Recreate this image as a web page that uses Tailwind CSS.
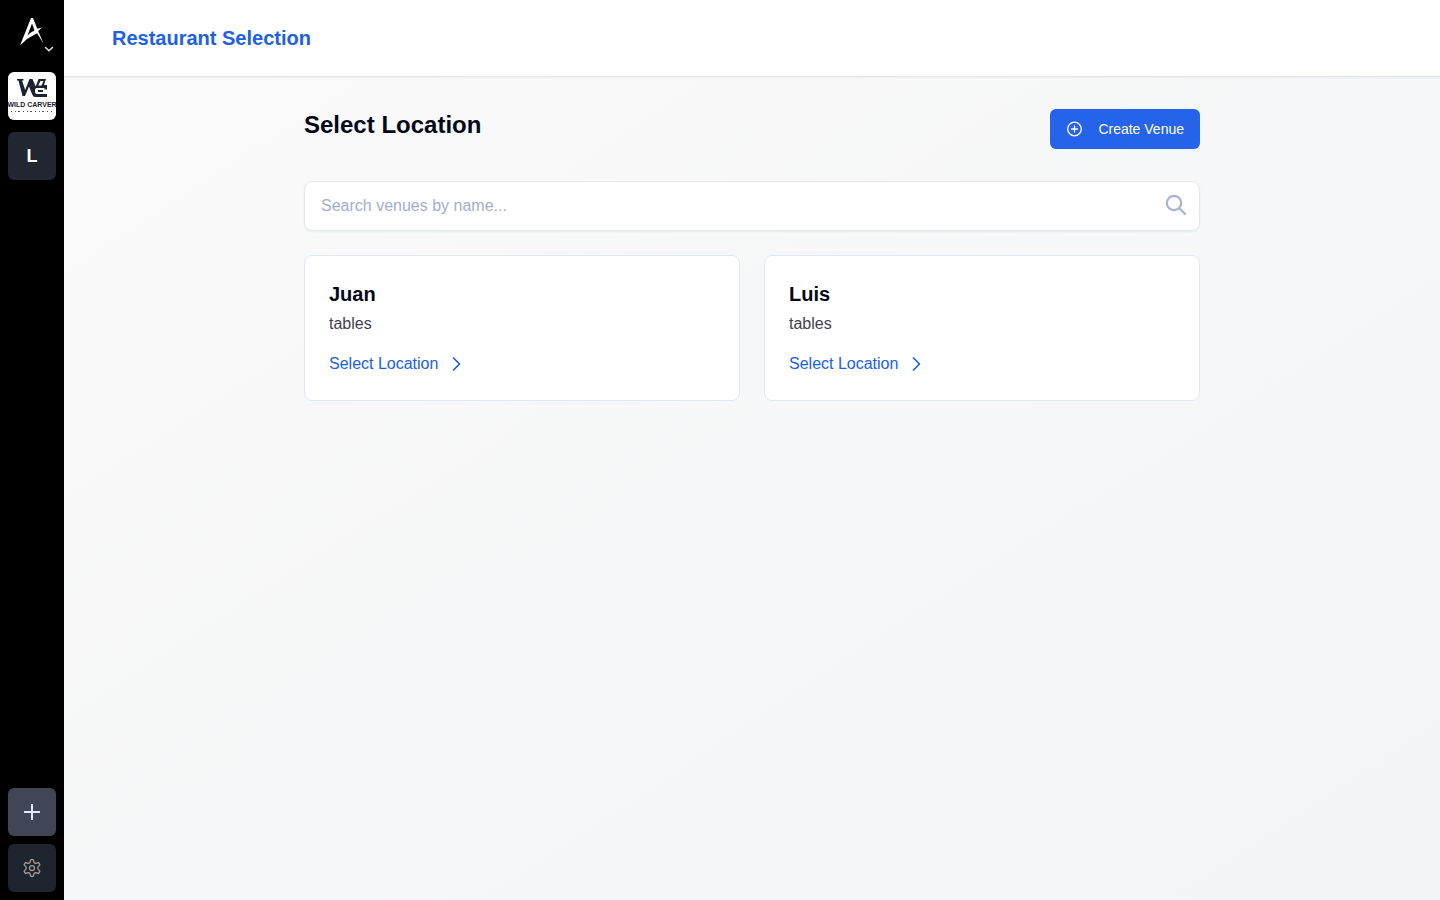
<!DOCTYPE html>
<html lang="en">
<head>
<meta charset="utf-8">
<meta name="viewport" content="width=device-width, initial-scale=1">
<title>Restaurant Selection</title>
<script src="https://cdn.jsdelivr.net/npm/@tailwindcss/browser@4"></script>
</head>
<body class="flex min-h-screen bg-black font-['Liberation_Sans',Arial,sans-serif] text-base text-[#020817]">
  <aside class="flex w-16 shrink-0 flex-col items-center justify-between bg-black px-2 pt-2 pb-2">
    <div class="flex flex-col gap-3">
      <button type="button" aria-label="Account menu" class="size-12 mb-1">
        <svg class="size-12" viewBox="8 8 48 48" fill="none">
          <path fill="#fff" fill-rule="evenodd" d="M31 18h2l4.300 10.800 4.700-1.300-3.800 3.500 5.300 12.500L37 33.200 27 39 20 45.500zM32 23.500 27.500 35.500 30 33 34.500 30.500z"/>
          <path stroke="#e5e7eb" stroke-width="1.500" stroke-linecap="round" stroke-linejoin="round" d="m45.500 47.500 3.500 3.200 3.500-3.200"/>
        </svg>
      </button>
      <button type="button" aria-label="Wild Carver" class="size-12 overflow-hidden rounded-md bg-white">
        <svg class="size-12" viewBox="0 0 48 48" fill="none">
          <path fill="#1c2230" d="M9 7h6.500v1.500H14l3.200 9.500L21.500 7h3l3.200 7.500L30.500 7H38l-2 6h3v4.500h-2.500V16h-7.500q-2 0-2 2v2q0 2 2 2H39v3H27.500q-2.500 0-3.300-2.500L21 14.500 17 24h-2.500L10.500 8.500H9zM32.500 9l-2.300 4.500h3.300l2-4.500z"/>
          <path stroke="#1c2230" stroke-width="2" d="M30 19h5"/>
          <text x="24" y="35" text-anchor="middle" fill="#1c2230" font-family="'Liberation Sans',sans-serif" font-size="7" font-weight="700">WILD CARVER</text>
          <path stroke="#4b5563" stroke-width="1" stroke-dasharray="1 3 1 2 2 3" d="M3 39.500h43"/>
        </svg>
      </button>
      <button type="button" class="size-12 rounded-md bg-[#222631] text-lg font-bold text-white">L</button>
    </div>
    <div class="flex flex-col gap-2">
      <button type="button" aria-label="Add restaurant" class="flex size-12 items-center justify-center rounded-md bg-[#404656]">
        <svg class="size-6" viewBox="0 0 24 24" stroke="#e6ebfa" stroke-width="2"><path d="M12 4v16M4 12h16"/></svg>
      </button>
      <button type="button" aria-label="Settings" class="flex size-12 items-center justify-center rounded-md bg-[#1f232d]">
        <svg class="size-5" viewBox="0 0 24 24" fill="none" stroke="#a39c9c" stroke-width="1.500" stroke-linecap="round" stroke-linejoin="round">
          <path d="M10.500 2h3l1 3.500 2 1 3.500-1 1.500 2.700L19 11v2l2.500 2.800L20 18.500l-3.500-1-2 1-1 3.500h-3l-1-3.500-2-1-3.500 1-1.500-2.700L5 13v-2L2.500 8.200 4 5.500l3.500 1 2-1z"/>
          <circle cx="12" cy="12" r="3"/>
        </svg>
      </button>
    </div>
  </aside>
  <div class="flex min-w-0 flex-1 flex-col bg-linear-to-br from-[#fafafa] to-[#f3f4f6]">
    <header class="border-b border-slate-200 bg-white px-12 py-6 shadow-xs">
      <h1 class="text-xl font-bold text-[#2060e6]">Restaurant Selection</h1>
    </header>
    <main class="mx-auto w-full max-w-4xl flex-1 py-8">
      <div class="mb-8 flex items-start justify-between">
        <h2 class="text-2xl font-bold">Select Location</h2>
        <button type="button" class="flex h-10 items-center gap-4 rounded-md bg-[#2563eb] px-4 text-sm text-white">
          <svg class="size-4" viewBox="0 0 16 16" fill="none" stroke="currentColor" stroke-width="1.300" stroke-linecap="round"><circle cx="8.500" cy="8" r="6.800"/><path d="M8.500 5v6M5.500 8h6"/></svg>
          Create Venue
        </button>
      </div>
      <div class="relative mb-6">
        <input type="search" aria-label="Search venues by name" placeholder="Search venues by name..." class="block w-full rounded-lg border border-slate-200 bg-white py-3 pr-12 pl-4 shadow-xs placeholder:text-[#a3aecf]">
        <svg class="pointer-events-none absolute top-3 right-3 size-6" viewBox="0 0 24 24" fill="none" stroke="#a6b3d9" stroke-width="2.200" stroke-linecap="round"><circle cx="10" cy="10" r="7.200"/><path d="m15.300 15.300 5.700 5.700"/></svg>
      </div>
      <div class="grid grid-cols-2 gap-6">
        <section class="rounded-lg border border-slate-200 bg-white p-6">
          <h3 class="text-xl font-bold">Juan</h3>
          <p class="mt-1 text-[#3f3f50]">tables</p>
          <a href="#juan" class="mt-4 flex items-center gap-2 text-[#2060e6]">Select Location
            <svg class="size-5" viewBox="0 0 20 20" fill="none" stroke="currentColor" stroke-width="1.700" stroke-linecap="round" stroke-linejoin="round"><path d="m7.500 4 6 6-6 6"/></svg>
          </a>
        </section>
        <section class="rounded-lg border border-slate-200 bg-white p-6">
          <h3 class="text-xl font-bold">Luis</h3>
          <p class="mt-1 text-[#3f3f50]">tables</p>
          <a href="#luis" class="mt-4 flex items-center gap-2 text-[#2060e6]">Select Location
            <svg class="size-5" viewBox="0 0 20 20" fill="none" stroke="currentColor" stroke-width="1.700" stroke-linecap="round" stroke-linejoin="round"><path d="m7.500 4 6 6-6 6"/></svg>
          </a>
        </section>
      </div>
    </main>
  </div>
</body>
</html>
